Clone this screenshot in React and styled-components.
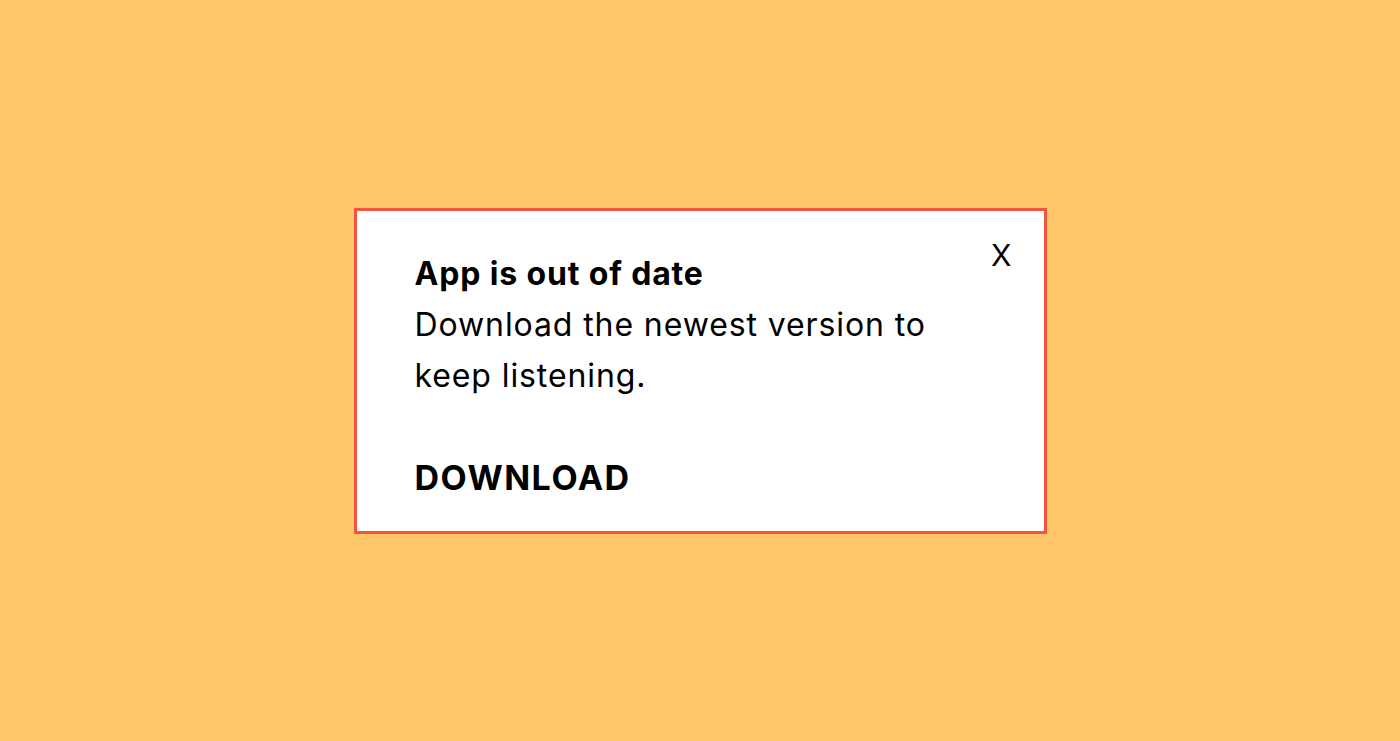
import React from 'react';
import styled, { createGlobalStyle } from 'styled-components';

const GlobalStyle = createGlobalStyle`
  html, body {
    margin: 0;
    padding: 0;
    height: 100%;
  }
  body {
    background: #fec669;
    font-family: Inter, "Noto Sans", sans-serif;
  }
  #root {
    height: 100%;
  }
`;

const Page = styled.div`
  height: 100vh;
  display: flex;
  align-items: center;
  justify-content: center;
`;

const Dialog = styled.div`
  position: relative;
  box-sizing: border-box;
  width: 693px;
  height: 326px;
  background: #ffffff;
  border: 3px solid #f2553c;
  padding: 37px 60px 0 58px;
  color: #000;
`;

const Title = styled.h2`
  margin: 0;
  font-size: 32px;
  font-weight: 700;
  line-height: 51px;
  letter-spacing: 0.85px;
`;

const Message = styled.p`
  margin: 0;
  font-size: 32px;
  font-weight: 400;
  line-height: 51px;
  letter-spacing: 0.9px;
  max-width: 540px;
`;

const DownloadButton = styled.button`
  margin-top: 56px;
  padding: 0;
  border: none;
  background: none;
  font-family: inherit;
  font-size: 34px;
  font-weight: 700;
  letter-spacing: 1.5px;
  color: #000;
  cursor: pointer;
`;

const CloseButton = styled.button`
  position: absolute;
  top: 26px;
  right: 32px;
  padding: 0;
  border: none;
  background: none;
  font-family: inherit;
  font-size: 30px;
  font-weight: 400;
  color: #000;
  cursor: pointer;
`;

const App = () => {
  return (
    <Page>
      <GlobalStyle />
      <Dialog>
        <CloseButton aria-label="Close">X</CloseButton>
        <Title>App is out of date</Title>
        <Message>Download the newest version to keep listening.</Message>
        <DownloadButton>DOWNLOAD</DownloadButton>
      </Dialog>
    </Page>
  );
};

export default App;
